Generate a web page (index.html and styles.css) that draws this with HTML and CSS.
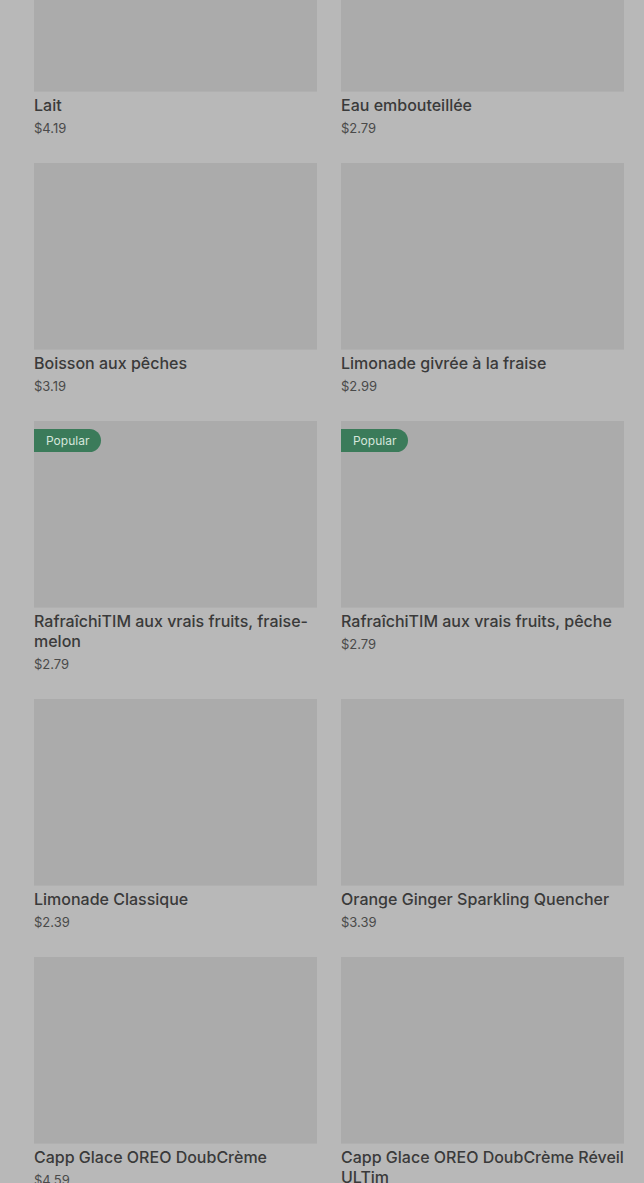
FILE: index.html
```html
<!DOCTYPE html>
<html lang="fr">
<head>
    <meta charset="UTF-8">
    <title>Boissons froides</title>
    <link rel="stylesheet" href="styles.css">
</head>
<body>
    <!-- grille des produits (fond assombri par la fenêtre modale) -->
    <main class="grid">
        <a class="card" href="#">
            <div class="thumb"></div>
            <h3 class="name">Lait</h3>
            <p class="price">$4.19</p>
        </a>
        <a class="card" href="#">
            <div class="thumb"></div>
            <h3 class="name">Eau embouteillée</h3>
            <p class="price">$2.79</p>
        </a>
        <a class="card" href="#">
            <div class="thumb"></div>
            <h3 class="name">Boisson aux pêches</h3>
            <p class="price">$3.19</p>
        </a>
        <a class="card" href="#">
            <div class="thumb"></div>
            <h3 class="name">Limonade givrée à la fraise</h3>
            <p class="price">$2.99</p>
        </a>
        <a class="card" href="#">
            <div class="thumb"><span class="badge">Popular</span></div>
            <h3 class="name">RafraîchiTIM aux vrais fruits, fraise-melon</h3>
            <p class="price">$2.79</p>
        </a>
        <a class="card" href="#">
            <div class="thumb"><span class="badge">Popular</span></div>
            <h3 class="name">RafraîchiTIM aux vrais fruits, pêche</h3>
            <p class="price">$2.79</p>
        </a>
        <a class="card" href="#">
            <div class="thumb"></div>
            <h3 class="name">Limonade Classique</h3>
            <p class="price">$2.39</p>
        </a>
        <a class="card" href="#">
            <div class="thumb"></div>
            <h3 class="name">Orange Ginger Sparkling Quencher</h3>
            <p class="price">$3.39</p>
        </a>
        <a class="card" href="#">
            <div class="thumb"></div>
            <h3 class="name">Capp Glace OREO DoubCrème</h3>
            <p class="price">$4.59</p>
        </a>
        <a class="card" href="#">
            <div class="thumb"></div>
            <h3 class="name">Capp Glace OREO DoubCrème Réveil ULTim</h3>
            <p class="price">$4.59</p>
        </a>
    </main>
</body>
</html>
```

FILE: styles.css
```css
* {
    margin: 0;
    padding: 0;
    box-sizing: border-box;
}

html, body {
    height: 100%;
    overflow: hidden;
}

body {
    background: #b8b8b8;
    font-family: Inter, Roboto, "Liberation Sans", Arial, sans-serif;
    color: #383838;
}

/* grille deux colonnes, page déjà défilée */
.grid {
    display: grid;
    grid-template-columns: 283px 283px;
    column-gap: 24px;
    row-gap: 26px;
    padding: 0 20px 0 34px;
    margin-top: -95px;
    align-items: start;
}

.card {
    display: block;
    color: inherit;
    text-decoration: none;
}

.thumb {
    position: relative;
    height: 187px;
    background: #ababab;
    border-bottom: 1px solid #b0b0b0;
}

.badge {
    position: absolute;
    left: 0;
    top: 8px;
    height: 23px;
    padding: 0 12px;
    line-height: 23px;
    font-size: 12px;
    color: #d6e6dc;
    background: #3b7b5a;
    border-radius: 0 12px 12px 0;
}

.name {
    margin-top: 3px;
    font-size: 16px;
    font-weight: 500;
    line-height: 20px;
    color: #3a3a3a;
}

.price {
    margin-top: 4px;
    font-size: 13px;
    line-height: 18px;
    color: #4a4a4a;
}
```
